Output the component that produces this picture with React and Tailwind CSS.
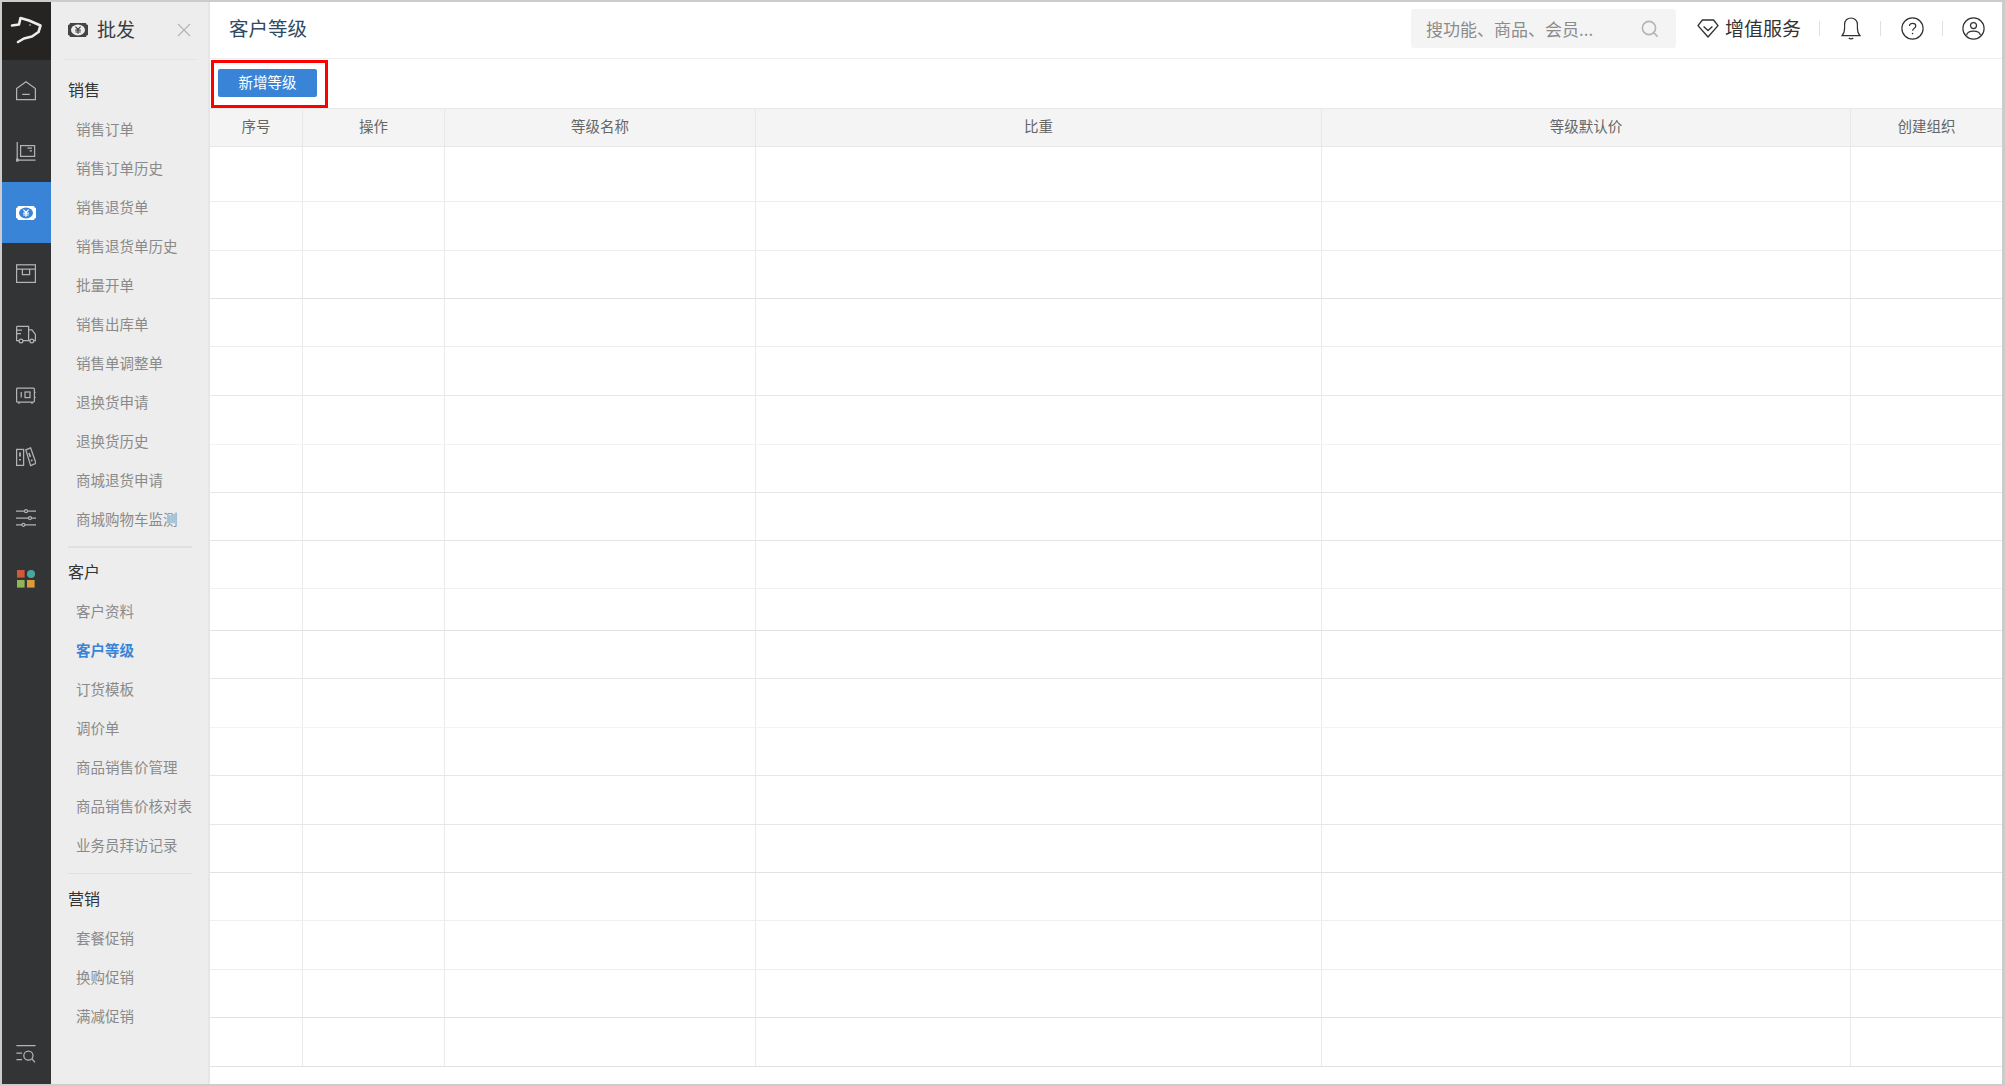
import React from 'react';

const columns = [
  { name: '序号', width: 'w-[93px]' },
  { name: '操作', width: 'w-[142px]' },
  { name: '等级名称', width: 'w-[311px]' },
  { name: '比重', width: 'w-[566px]' },
  { name: '等级默认价', width: 'w-[529px]' },
  { name: '创建组织', width: 'flex-1' },
];

// row heights are uneven in the source, kept as is
const rows = [
  'h-[55px] border-[#ececec]', 'h-[49px] border-[#ececec]', 'h-[48px] border-[#e2e2e2]',
  'h-[48px] border-[#ececec]', 'h-[49px] border-[#e8e8e8]', 'h-[49px] border-[#f2f2f2]',
  'h-[48px] border-[#e6e6e6]', 'h-[48px] border-[#e4e4e4]', 'h-[48px] border-[#f0f0f0]',
  'h-[42px] border-[#e2e2e2]', 'h-[48px] border-[#e6e6e6]', 'h-[49px] border-[#f3f3f3]',
  'h-[48px] border-[#e6e6e6]', 'h-[49px] border-[#e6e6e6]', 'h-[48px] border-[#e2e2e2]',
  'h-[48px] border-[#efefef]', 'h-[49px] border-[#ededed]', 'h-[48px] border-[#e2e2e2]',
  'h-[49px] border-[#e2e2e2]',
];

const menu = [
  {
    title: '销售',
    items: ['销售订单', '销售订单历史', '销售退货单', '销售退货单历史', '批量开单', '销售出库单', '销售单调整单', '退换货申请', '退换货历史', '商城退货申请', '商城购物车监测'],
  },
  {
    title: '客户',
    items: ['客户资料', '客户等级', '订货模板', '调价单', '商品销售价管理', '商品销售价核对表', '业务员拜访记录'],
  },
  {
    title: '营销',
    items: ['套餐促销', '换购促销', '满减促销'],
  },
];

const Icon = ({ children, className = 'w-5 h-5' }) => (
  <svg viewBox="0 0 20 20" fill="none" stroke="currentColor" strokeWidth="1.25" className={className}>
    {children}
  </svg>
);

const MoneyIcon = ({ body, center, mark }) => (
  <svg viewBox="0 0 20 20" className="w-5 h-5">
    <path d="M2 3H18A2 2 0 0 0 20 5V15A2 2 0 0 0 18 17H2A2 2 0 0 0 0 15V5A2 2 0 0 0 2 3Z" fill={body} />
    <ellipse cx="10" cy="10" rx="7" ry="5.4" fill={center} />
    <path d="M7.4 6.6 10 9.4 12.6 6.6M10 9.4V13.8M7.2 10.2H12.8M7.2 12H12.8" fill="none" stroke={mark} strokeWidth="1.2" />
  </svg>
);

const railIcons = [
  <Icon key="home">
    <path d="M0.6 7.5 10 0.8 19.4 7.5V18.6H0.6Z" />
    <path d="M6.2 13.4H13.8" />
  </Icon>,
  <Icon key="cart">
    <path d="M1.2 0V18H19.6" />
    <rect x="4.6" y="3.6" width="14" height="10.8" />
    <path d="M11.4 6.2H16M13.6 8.8H16" />
    <circle cx="1.4" cy="18" r="1.1" />
  </Icon>,
  <MoneyIcon key="money" body="#ffffff" center="#3a84d8" mark="#ffffff" />,
  <Icon key="box">
    <rect x="0.6" y="0.8" width="18.8" height="17.6" />
    <path d="M0.6 5.2H19.4M6.4 5.2V10.6H13.6V5.2" />
  </Icon>,
  <Icon key="truck">
    <path d="M0.6 1.4H12.6V15.6H7M3 15.6H0.6V1.4M0.6 5H6M0.6 8.6H5M12.6 4.8H16L19.4 9.4V15.6H17.8M14 15.6H12.6" />
    <circle cx="5" cy="16" r="1.9" />
    <circle cx="15.8" cy="16" r="1.9" />
  </Icon>,
  <Icon key="safe">
    <rect x="0.6" y="2.2" width="17.8" height="13.8" rx="1" />
    <rect x="9" y="6" width="5" height="5.6" />
    <path d="M5.2 6V11.6M18.4 6.4H19.6M18.4 11.4H19.6M3 16V18M16 16V18" />
  </Icon>,
  <Icon key="books">
    <rect x="0.6" y="2.4" width="7" height="16" />
    <path d="M4 5.4V9.6M4 12V13.4" strokeWidth="1.8" />
    <path d="M9.8 2.8 14.6 0.8 20 16.2 14.6 18.6Z" />
    <path d="M13 6 14.4 10M15.4 12.6 16 14.2" strokeWidth="1.6" />
  </Icon>,
  <Icon key="sliders">
    <path d="M0 3.2H20M0 10H20M0 16.8H20" />
    <circle cx="10" cy="3.2" r="1.5" fill="#333436" />
    <circle cx="14" cy="10" r="1.5" fill="#333436" />
    <circle cx="7.4" cy="16.8" r="1.5" fill="#333436" />
  </Icon>,
  <svg key="apps" viewBox="0 0 20 20" className="w-5 h-5">
    <rect x="1" y="1" width="7.6" height="7.6" fill="#cf5a3a" />
    <circle cx="15" cy="5" r="4" fill="#4ba79c" />
    <rect x="1" y="11" width="7.6" height="7.6" fill="#93b650" />
    <rect x="11" y="11" width="7.6" height="7.6" fill="#dc9a3a" />
  </svg>,
];

function Rail() {
  return (
    <div className="w-[49px] shrink-0 bg-[#333436] flex flex-col text-[#b3b3b3]">
      <div className="h-[58px] bg-[#252422] flex items-center justify-center">
        <svg viewBox="0 0 49 58" className="w-[49px] h-[58px]" fill="none" stroke="#ececec" strokeWidth="2.6" strokeLinejoin="round" strokeLinecap="round">
          <path d="M10 23.5 17 22.5 18.5 16 27 18.5 38.5 23.5 36.5 30 30 34.5 22 36.5 16 40" />
          <circle cx="28" cy="23" r="1" fill="#8a8a8a" stroke="none" />
        </svg>
      </div>
      {railIcons.map((icon, i) => (
        <div
          key={i}
          className={i === 2 ? 'h-[61px] pr-[1px] flex items-center justify-center bg-[#3a84d8] text-white' : 'h-[61px] pr-[1px] flex items-center justify-center'}
        >
          {icon}
        </div>
      ))}
      <div className="mt-auto h-[60px] pr-[1px] flex items-center justify-center">
        <Icon>
          <path d="M0.4 1.6H19.6M0.4 9H6M0.4 15.6H6" />
          <circle cx="12.4" cy="11.6" r="4.6" />
          <path d="M16 15 19 18.4" />
        </Icon>
      </div>
    </div>
  );
}

function Panel() {
  return (
    <div className="w-[159px] shrink-0 bg-[#ededed] border-r-2 border-[#e6e6e6]">
      <div className="mx-[12px] h-[58px] border-b border-[#e4e4e4] flex items-center pb-[2px] text-[#3c3c3c]">
        <span className="ml-[5px]">
          <MoneyIcon body="#444444" center="#ededed" mark="#444444" />
        </span>
        <span className="ml-[9px] text-[19px]">批发</span>
        <svg viewBox="0 0 14 14" className="ml-auto mr-[5px] w-[14px] h-[14px]" stroke="#b5b5b5" strokeWidth="1.3">
          <path d="M1 1 13 13M13 1 1 13" />
        </svg>
      </div>
      <div className="pt-[8px]">
        {menu.map((group, i) => (
          <div key={group.title}>
            {i > 0 && <div className="mt-[8px] mb-[3px] ml-[17px] mr-[16px] h-[1.5px] bg-[#e0e0e0]" />}
            <div className="h-[41px] pl-[17px] flex items-center text-[16px] text-[#333]">{group.title}</div>
            {group.items.map((item) => (
              <div
                key={item}
                className={item === '客户等级'
                  ? 'h-[39px] pl-[25px] flex items-center text-[14.5px] font-bold text-[#3a84d8]'
                  : 'h-[39px] pl-[25px] flex items-center text-[14.5px] text-[#8a8a8a] whitespace-nowrap'}
              >
                {item}
              </div>
            ))}
          </div>
        ))}
      </div>
    </div>
  );
}

function TopBar() {
  return (
    <div className="h-[57px] border-b border-[#efefef] flex items-center pl-[19px] pb-[3px] text-[#333]">
      <h1 className="text-[19.5px] text-[#2f4a63] mb-[2px]">客户等级</h1>
      <div className="ml-auto w-[265px] h-[39px] bg-[#f4f4f4] rounded-[3px] flex items-center pl-[15px] text-[17px] text-[#8c8c8c]">
        搜功能、商品、会员...
        <svg viewBox="0 0 18 18" className="ml-auto mr-[17px] w-[18px] h-[18px]" fill="none" stroke="#b4b4b4" strokeWidth="1.6">
          <circle cx="8" cy="8" r="6.6" />
          <path d="M12.8 12.8 16.6 16.6" />
        </svg>
      </div>
      <svg viewBox="0 0 22 19" className="ml-[21px] w-[22px] h-[19px]" fill="none" stroke="#333" strokeWidth="1.4" strokeLinejoin="round">
        <path d="M5.4 1H16.6L21 6.6 11 18 1 6.6Z" />
        <path d="M6.6 7.4 11 11.6 15.4 7.4" />
      </svg>
      <span className="ml-[6px] text-[19px] text-[#333]">增值服务</span>
      <div className="ml-[18px] w-px h-[15px] bg-[#e0e0e0]" />
      <svg viewBox="0 0 20 23" className="ml-[21px] w-[20px] h-[23px]" fill="none" stroke="#333" strokeWidth="1.2">
        <path d="M1 18.6H19C17 16.6 16.4 14.6 16.4 11V7.4C16.4 3.6 13.6 1 10 1S3.6 3.6 3.6 7.4V11C3.6 14.6 3 16.6 1 18.6Z" />
        <path d="M7.8 21C8.8 22.2 11.2 22.2 12.2 21" />
      </svg>
      <div className="ml-[19px] w-px h-[15px] bg-[#e0e0e0]" />
      <svg viewBox="0 0 23 23" className="ml-[20px] w-[23px] h-[23px]" fill="none" stroke="#333" strokeWidth="1.2">
        <circle cx="11.5" cy="11.5" r="10.6" />
        <path d="M8.4 9C8.4 5.4 14.8 5.4 14.8 9 14.8 11.4 11.6 11 11.6 13.8" />
        <circle cx="11.6" cy="16.6" r="0.8" fill="#333" stroke="none" />
      </svg>
      <div className="ml-[18px] w-px h-[15px] bg-[#e0e0e0]" />
      <svg viewBox="0 0 23 23" className="ml-[19px] mr-[17px] w-[23px] h-[23px]" fill="none" stroke="#333" strokeWidth="1.2">
        <circle cx="11.5" cy="11.5" r="10.6" />
        <circle cx="11.5" cy="8.6" r="3" />
        <path d="M4.6 18.4C5.2 12.8 17.8 12.8 18.4 18.4" />
      </svg>
    </div>
  );
}

function Table() {
  return (
    <div>
      <div className="flex h-[39px] border-y border-[#e8e8e8] bg-[#f4f4f4]">
        {columns.map((col) => (
          <div
            key={col.name}
            className={`${col.width} border-r border-[#e8e8e8] last:border-r-0 pb-[4px] flex items-center justify-center text-[14.5px] text-[#666]`}
          >
            {col.name}
          </div>
        ))}
      </div>
      {rows.map((row, i) => (
        <div key={i} className={`flex border-b ${row}`}>
          {columns.map((col) => (
            <div key={col.name} className={`${col.width} border-r border-[#ebebeb] last:border-r-0`} />
          ))}
        </div>
      ))}
    </div>
  );
}

export default function App() {
  return (
    <div
      className="h-[1086px] pt-[2px] pl-[2px] pr-[3px] pb-[2px] bg-[#cccccc] overflow-hidden"
      style={{ fontFamily: '"Noto Sans CJK SC", "Noto Sans", sans-serif' }}
    >
      <div className="h-full flex bg-white">
        <Rail />
        <Panel />
        <div className="relative flex-1 min-w-0 flex flex-col">
          <TopBar />
          <div className="h-[49px] pl-[8px] pt-[10px]">
            <button className="w-[99px] h-[28px] pb-[2px] rounded-[2px] bg-[#3a84d8] text-white text-[14.5px] flex items-center justify-center">
              新增等级
            </button>
          </div>
          <Table />
          {/* red annotation from the original screenshot */}
          <div className="absolute left-[1px] top-[58px] w-[117px] h-[48px] border-[3px] border-[#ff0000]" />
        </div>
      </div>
    </div>
  );
}
